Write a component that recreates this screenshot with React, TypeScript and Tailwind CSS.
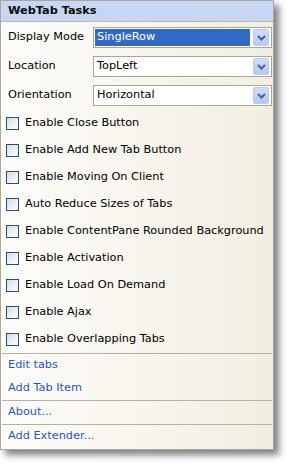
import React from "react";

const font = { fontFamily: '"DejaVu Sans", Tahoma, sans-serif' };

function Chevron() {
  return (
    <svg width="9" height="6" viewBox="0 0 9 6">
      <path d="M1 1 L4.5 4.5 L8 1" stroke="#4d6185" strokeWidth="2" fill="none" />
    </svg>
  );
}

function Select({ value, selected }: { value: string; selected?: boolean }) {
  return (
    <div className="flex-1 h-[21px] border border-[#aaa696] bg-white flex items-center pl-[1px] pr-[2px]">
      <div
        className={
          "flex-1 h-[17px] flex items-center pl-[2px] mr-[3px] " +
          (selected ? "bg-[#316ac5] text-white" : "text-black")
        }
      >
        {value}
      </div>
      <div className="w-[16px] h-[17px] rounded-[2px] border border-[#b9cdf7] bg-linear-to-b from-[#cfdcfc] to-[#b4c8f6] flex items-center justify-center">
        <Chevron />
      </div>
    </div>
  );
}

function Check({ label }: { label: string }) {
  return (
    <div className="h-[27px] flex items-center pl-[5px]">
      <div className="w-[13px] h-[13px] border border-[#1c5180] bg-linear-to-br from-[#dcdcd6] to-white mr-[6px]" />
      <span>{label}</span>
    </div>
  );
}

function Sep() {
  return <div className="h-[1px] bg-[#b5b1a1] mx-[1px]" />;
}

function Link({ label }: { label: string }) {
  return <div className="h-[23px] flex items-center pl-[7px] text-[#1f57d3]">{label}</div>;
}

export default function App() {
  return (
    <div className="w-[290px] h-[466px] bg-white" style={font}>
      <div className="w-[274px] h-[450px] border border-[#aca899] bg-linear-to-r from-[#fefcfa] to-[#f1eee1] shadow-[5px_5px_7px_rgba(0,0,0,0.5)] text-[11.3px] text-black flex flex-col">
        <div className="h-[21px] bg-[#c7d6f3] border-b border-[#b8b8b0] flex items-center pl-[7px] font-bold text-[#0a0a0a]">
          WebTab Tasks
        </div>
        <div className="flex flex-col gap-[8px] pt-[5px] pr-[1px]">
          <div className="flex items-center">
            <div className="w-[92px] pl-[7px]">Display Mode</div>
            <Select value="SingleRow" selected />
          </div>
          <div className="flex items-center">
            <div className="w-[92px] pl-[7px]">Location</div>
            <Select value="TopLeft" />
          </div>
          <div className="flex items-center">
            <div className="w-[92px] pl-[7px]">Orientation</div>
            <Select value="Horizontal" />
          </div>
        </div>
        <div className="flex flex-col pt-[4px]">
          <Check label="Enable Close Button" />
          <Check label="Enable Add New Tab Button" />
          <Check label="Enable Moving On Client" />
          <Check label="Auto Reduce Sizes of Tabs" />
          <Check label="Enable ContentPane Rounded Background" />
          <Check label="Enable Activation" />
          <Check label="Enable Load On Demand" />
          <Check label="Enable Ajax" />
          <Check label="Enable Overlapping Tabs" />
        </div>
        <Sep />
        <Link label="Edit tabs" />
        <Link label="Add Tab Item" />
        <Sep />
        <Link label="About..." />
        <Sep />
        <Link label="Add Extender..." />
      </div>
    </div>
  );
}
